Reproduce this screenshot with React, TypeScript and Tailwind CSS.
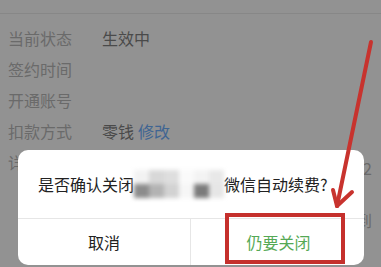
const rows = [
  { label: "当前状态", value: "生效中" },
  { label: "签约时间", value: "" },
  { label: "开通账号", value: "" },
];

const mosaicTop = ["#f2f2f2", "#d8d8d8", "#dedede", "#fafafa", "#f3f3f3", "#e8e8e8"];
const mosaicBottom = ["#8c8c8c", "#b3b3b3", "#d2d2d2", "#f6f6f6", "#7b7b7b", "#e6e6e6"];

export default function App() {
  return (
    <div
      className="relative w-[381px] h-[267px] overflow-hidden bg-[#929292] text-[16px] leading-none"
      style={{ fontFamily: '"Noto Sans CJK SC", "Noto Sans", sans-serif' }}
    >
      <div className="h-[14px] border-b border-[#878787]" />
      <div className="pt-[8px] pl-[8px] pr-[9px]">
        {rows.map((r) => (
          <div key={r.label} className="flex items-center h-[31px]">
            <span className="w-[94px] text-[#6a6a6a]">{r.label}</span>
            <span className="text-[#4a4a4a]">{r.value}</span>
          </div>
        ))}
        <div className="flex items-center h-[31px]">
          <span className="w-[94px] text-[#6a6a6a]">扣款方式</span>
          <span className="text-[#4a4a4a]">零钱</span>
          <span className="ml-[4px] text-[#3f6592]">修改</span>
        </div>
        <div className="flex items-center justify-between h-[31px]">
          <span className="text-[#6a6a6a]">详情</span>
          <span className="text-[#6a6a6a] pt-[12px]">2</span>
        </div>
        <div className="h-[31px]" />
        <div className="flex items-center justify-end h-[31px]">
          <span className="text-[#6a6a6a] -mt-[8px]">到</span>
        </div>
      </div>

      {/* dialog */}
      <div className="absolute left-[18px] top-[150px] w-[346px] h-[115px] bg-white rounded-[10px] flex flex-col">
        <div className="h-[68px] flex items-center pl-[20px] text-[#222222] text-[16px]">
          <span>是否确认关闭</span>
          <span className="inline-flex flex-col blur-[2px]">
            <span className="flex">
              {mosaicTop.map((c, i) => (
                <span key={i} className="w-[15px] h-[14px]" style={{ background: c }} />
              ))}
            </span>
            <span className="flex">
              {mosaicBottom.map((c, i) => (
                <span key={i} className="w-[15px] h-[14px]" style={{ background: c }} />
              ))}
            </span>
          </span>
          <span>微信自动续费?</span>
        </div>
        <div className="flex-1 grid grid-cols-2 border-t border-[#e6e6e6]">
          <div className="flex items-center justify-center text-[#222222] border-r border-[#e6e6e6]">
            取消
          </div>
          <div className="flex items-center justify-center pl-[2px] text-[#55a955]">仍要关闭</div>
        </div>
      </div>

      {/* annotation */}
      <div className="absolute left-[225px] top-[213px] w-[120px] h-[51px] border-[4px] border-[#c5302c]" />
      <svg className="absolute inset-0" width="381" height="267" viewBox="0 0 381 267">
        <g stroke="#c8332e" strokeWidth="4" strokeLinecap="round" fill="none">
          <line x1="371" y1="42" x2="337" y2="206" />
          <line x1="337" y1="206" x2="333" y2="190" />
          <line x1="337" y1="206" x2="352" y2="192" />
        </g>
      </svg>
    </div>
  );
}
